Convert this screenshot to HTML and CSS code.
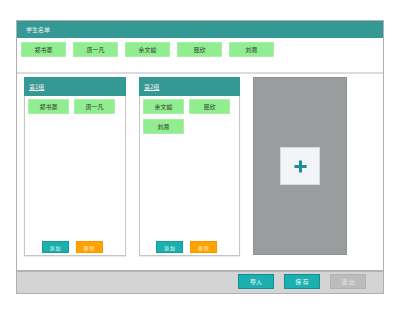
FILE: index.html
```html
<!DOCTYPE html>
<html lang="zh">
<head>
<meta charset="utf-8">
<title>学生名单</title>
<link rel="stylesheet" href="styles.css">
</head>
<body>
<div class="frame">
  <div class="header">学生名单</div>
  <div class="pool">
    <span class="tag">郑书豪</span>
    <span class="tag">唐一凡</span>
    <span class="tag">余文峻</span>
    <span class="tag">昆欣</span>
    <span class="tag">刘易</span>
  </div>
  <div class="groups">
    <div class="group g1">
      <div class="ghead"><a class="gname">第1组</a></div>
      <div class="gtags">
        <span class="tag small">郑书豪</span>
        <span class="tag small">唐一凡</span>
      </div>
      <div class="gbtns">
        <span class="btn add">添 加</span>
        <span class="btn remove">移 除</span>
      </div>
    </div>
    <div class="group g2">
      <div class="ghead"><a class="gname">第2组</a></div>
      <div class="gtags">
        <span class="tag small">余文峻</span>
        <span class="tag small">昆欣</span>
        <span class="tag small">刘易</span>
      </div>
      <div class="gbtns">
        <span class="btn add">添 加</span>
        <span class="btn remove">移 除</span>
      </div>
    </div>
    <div class="newgroup">
      <div class="plusbox">
        <svg width="15" height="15" viewBox="0 0 16 16"><path d="M8 1.5V14.5M1.5 8H14.5" stroke="#1b8f9b" stroke-width="3.2"/></svg>
      </div>
    </div>
  </div>
  <div class="footer">
    <span class="fbtn">导入</span>
    <span class="fbtn">保 存</span>
    <span class="fbtn exit">退 出</span>
  </div>
</div>
</body>
</html>
```
FILE: styles.css
```css
* { box-sizing: border-box; }
body {
  margin: 0;
  background: #ffffff;
  font-family: "Noto Sans CJK SC", "Noto Sans", sans-serif;
  font-size: 6px;
}
.frame {
  margin: 20px 0 0 16px;
  width: 368px;
  border: 1px solid #b0b0b0;
  background: #fff;
}
.header {
  height: 17px;
  background: #349894;
  color: #f2f2f2;
  line-height: 17px;
  padding-left: 9px;
}
.pool {
  display: flex;
  gap: 7px;
  padding: 4px 0 0 4px;
  border-bottom: 2px solid #dcdcdc;
  height: 36px;
}
.tag {
  width: 45px;
  height: 15px;
  background: #90ee90;
  border: 1px solid #a8f0a8;
  color: #333;
  display: flex;
  align-items: center;
  justify-content: center;
}
.tag.small { width: 41px; }
.groups {
  height: 196px;
  display: flex;
  gap: 13px;
  padding: 3px 0 0 7px;
}
.group {
  height: 179px;
  border: 1px solid #c6c6c6;
  box-shadow: 0 1px 1px rgba(0,0,0,0.08);
  display: flex;
  flex-direction: column;
}
.g1 { width: 102px; }
.g2 { width: 101px; }
.ghead {
  height: 19px;
  margin: -1px -1px 0 -1px;
  background: #349894;
  display: flex;
  align-items: center;
  padding-left: 5px;
}
.gname {
  color: #f2f2f2;
  text-decoration: underline;
}
.gtags {
  display: flex;
  flex-wrap: wrap;
  gap: 5px;
  padding: 3px 0 0 3px;
  align-content: flex-start;
  flex: 1;
}
.gbtns {
  display: flex;
  justify-content: center;
  gap: 7px;
  padding: 0 6px 2px 0;
}
.btn {
  width: 27px;
  height: 12px;
  color: #e8f8f8;
  display: flex;
  align-items: center;
  justify-content: center;
  font-size: 5px;
}
.add { background: #1bafb0; border: 1px solid #159c9c; }
.remove { background: #ffa200; border: 1px solid #f59a00; color: #fff2dd; }
.newgroup {
  width: 94px;
  height: 178px;
  background: #9a9d9d;
  border: 1px solid #909393;
  display: flex;
  align-items: center;
  justify-content: center;
}
.plusbox {
  width: 40px;
  height: 38px;
  background: #f3f4f8;
  border: 1px solid #d8dadf;
  display: flex;
  align-items: center;
  justify-content: center;
}
.footer {
  height: 23px;
  background: #d3d4d3;
  border-top: 2px solid #b4b4b4;
  display: flex;
  justify-content: flex-end;
  gap: 10px;
  padding: 2px 17px 0 0;
}
.fbtn {
  width: 36px;
  height: 15px;
  background: #1bafb0;
  border: 1px solid #138f8f;
  color: #eefafa;
  display: flex;
  align-items: center;
  justify-content: center;
}
.fbtn.exit {
  background: #bcbcbc;
  border-color: #b2b2b2;
  color: #e4e4e4;
}
```
